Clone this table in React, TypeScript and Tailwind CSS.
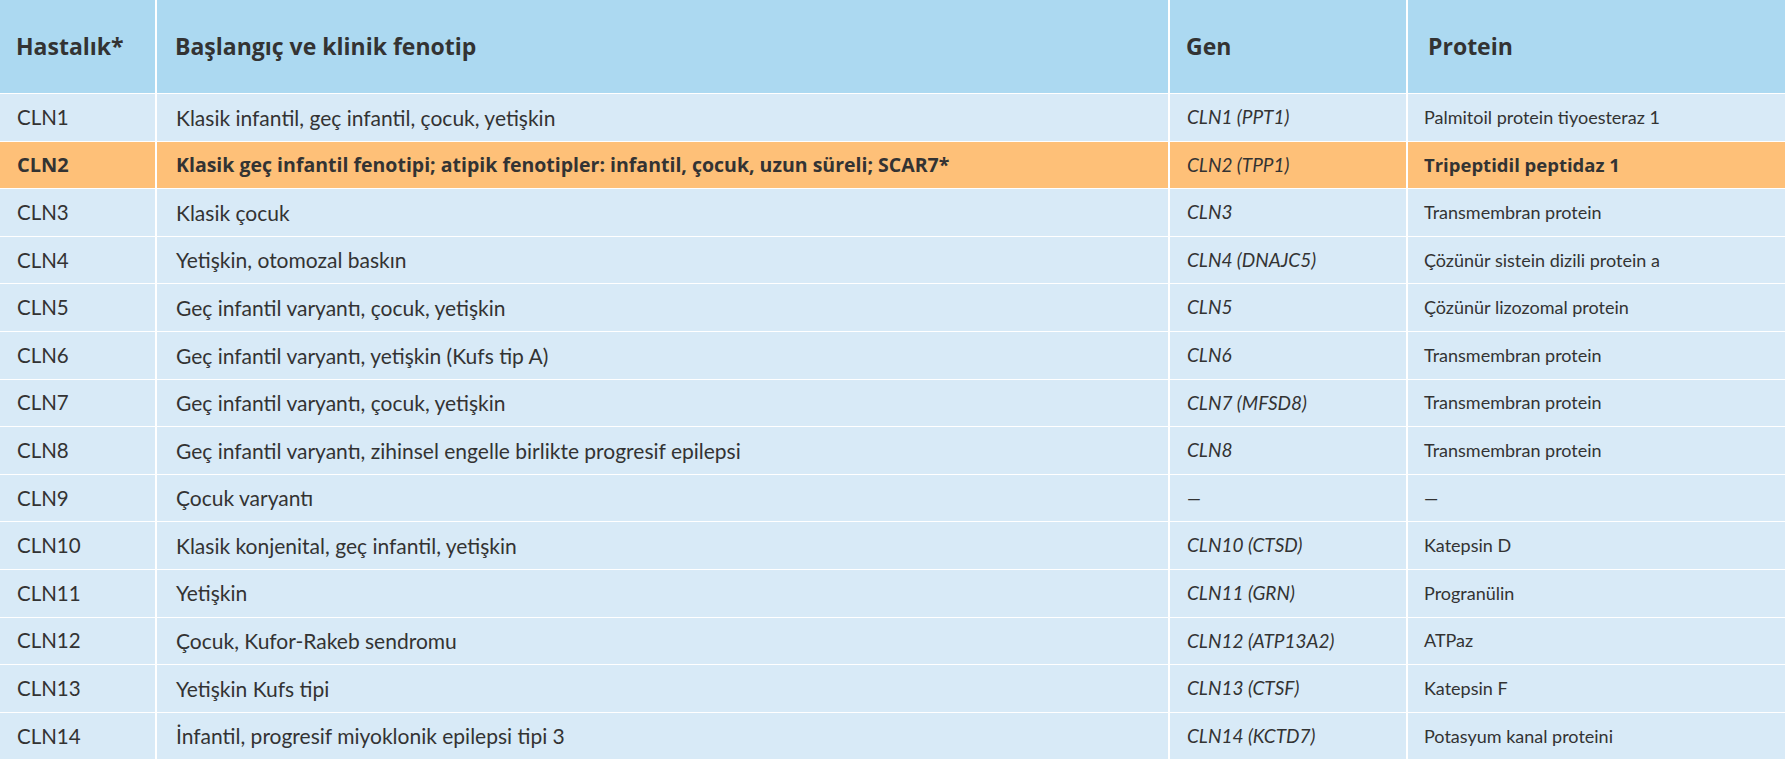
const rows = [
  { h: "CLN1", f: "Klasik infantil, geç infantil, çocuk, yetişkin", g: "CLN1 (PPT1)", p: "Palmitoil protein tiyoesteraz 1" },
  { h: "CLN2", f: "Klasik geç infantil fenotipi; atipik fenotipler: infantil, çocuk, uzun süreli; SCAR7*", g: "CLN2 (TPP1)", p: "Tripeptidil peptidaz 1", hi: true },
  { h: "CLN3", f: "Klasik çocuk", g: "CLN3", p: "Transmembran protein" },
  { h: "CLN4", f: "Yetişkin, otomozal baskın", g: "CLN4 (DNAJC5)", p: "Çözünür sistein dizili protein a" },
  { h: "CLN5", f: "Geç infantil varyantı, çocuk, yetişkin", g: "CLN5", p: "Çözünür lizozomal protein" },
  { h: "CLN6", f: "Geç infantil varyantı, yetişkin (Kufs tip A)", g: "CLN6", p: "Transmembran protein" },
  { h: "CLN7", f: "Geç infantil varyantı, çocuk, yetişkin", g: "CLN7 (MFSD8)", p: "Transmembran protein" },
  { h: "CLN8", f: "Geç infantil varyantı, zihinsel engelle birlikte progresif epilepsi", g: "CLN8", p: "Transmembran protein" },
  { h: "CLN9", f: "Çocuk varyantı", g: "—", p: "—" },
  { h: "CLN10", f: "Klasik konjenital, geç infantil, yetişkin", g: "CLN10 (CTSD)", p: "Katepsin D" },
  { h: "CLN11", f: "Yetişkin", g: "CLN11 (GRN)", p: "Progranülin" },
  { h: "CLN12", f: "Çocuk, Kufor-Rakeb sendromu", g: "CLN12 (ATP13A2)", p: "ATPaz" },
  { h: "CLN13", f: "Yetişkin Kufs tipi", g: "CLN13 (CTSF)", p: "Katepsin F" },
  { h: "CLN14", f: "İnfantil, progresif miyoklonik epilepsi tipi 3", g: "CLN14 (KCTD7)", p: "Potasyum kanal proteini" },
];

const cols = "grid grid-cols-[155px_1011px_236px_1fr] gap-x-[2px]";
const strong = "font-['Open_Sans',sans-serif] font-bold";

export default function App() {
  return (
    <div className="w-[1785px] h-[760px] overflow-hidden bg-white font-['Lato',sans-serif] text-[#333333]">
      <div className={`${cols} h-[93px] bg-white`}>
        <div className={`bg-[#acd9f1] flex items-center pl-[16px] text-[23px] ${strong}`}>Hastalık*</div>
        <div className={`bg-[#acd9f1] flex items-center pl-[18px] text-[23px] ${strong}`}>Başlangıç ve klinik fenotip</div>
        <div className={`bg-[#acd9f1] flex items-center pl-[16px] text-[23px] ${strong}`}>Gen</div>
        <div className={`bg-[#acd9f1] flex items-center pl-[20px] text-[23px] ${strong}`}>Protein</div>
      </div>
      {rows.map((r) => {
        const bg = r.hi ? "bg-[#fec078]" : "bg-[#d8eaf7]";
        return (
          <div key={r.h} className={`${cols} mt-[1px] h-[46.6px] bg-white`}>
            <div className={`${bg} flex items-center pl-[17px] ${r.hi ? `text-[20px] ${strong}` : "text-[20.5px]"}`}>{r.h}</div>
            <div className={`${bg} flex items-center pl-[19px] ${r.hi ? `text-[19.5px] ${strong}` : "text-[21px]"}`}>{r.f}</div>
            <div className={`${bg} flex items-center pl-[17px] text-[19px] italic`}>{r.g}</div>
            <div className={`${bg} flex items-center pl-[16px] ${r.hi ? `text-[18.5px] ${strong}` : "text-[18px]"}`}>{r.p}</div>
          </div>
        );
      })}
    </div>
  );
}
